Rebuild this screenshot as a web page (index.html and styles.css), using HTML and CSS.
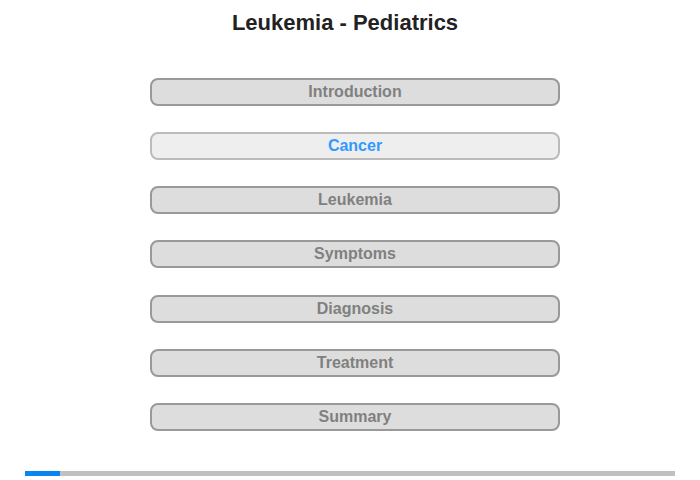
FILE: index.html
```html
<!DOCTYPE html>
<html>
<head>
<meta charset="utf-8">
<link rel="stylesheet" href="styles.css">
</head>
<body>
<div class="page">
  <h1 class="title">Leukemia - Pediatrics</h1>
  <nav class="menu">
    <div class="item">Introduction</div>
    <div class="item active">Cancer</div>
    <div class="item">Leukemia</div>
    <div class="item">Symptoms</div>
    <div class="item">Diagnosis</div>
    <div class="item">Treatment</div>
    <div class="item">Summary</div>
  </nav>
  <div class="progress"><div class="fill" style="width:35px"></div></div>
</div>
</body>
</html>
```
FILE: styles.css
```css
html, body { margin: 0; padding: 0; background: #fff; }
.page {
  width: 700px; height: 480px;
  font-family: "Liberation Sans", Arial, sans-serif;
  display: flex; flex-direction: column; align-items: center;
}
.title {
  margin: 10px 0 0 -10px;
  font-size: 22px; font-weight: bold; color: #222;
  line-height: 25px;
}
.menu {
  margin-top: 43px;
  display: flex; flex-direction: column; gap: 26.15px;
  margin-left: 10px;
}
.item {
  box-sizing: border-box;
  width: 410px; height: 28px;
  border: 2px solid #999; border-radius: 8px;
  background: #ddd; color: #808080;
  font-size: 16px; font-weight: bold;
  display: flex; align-items: center; justify-content: center;
}
.item.active {
  background: #eee; border-color: #bbb; color: #3399ff;
}
.progress {
  margin-top: 39.7px;
  width: 650px; height: 5px; background: #c0c0c0;
}
.fill { height: 100%; background: #0a84f0; }
```
